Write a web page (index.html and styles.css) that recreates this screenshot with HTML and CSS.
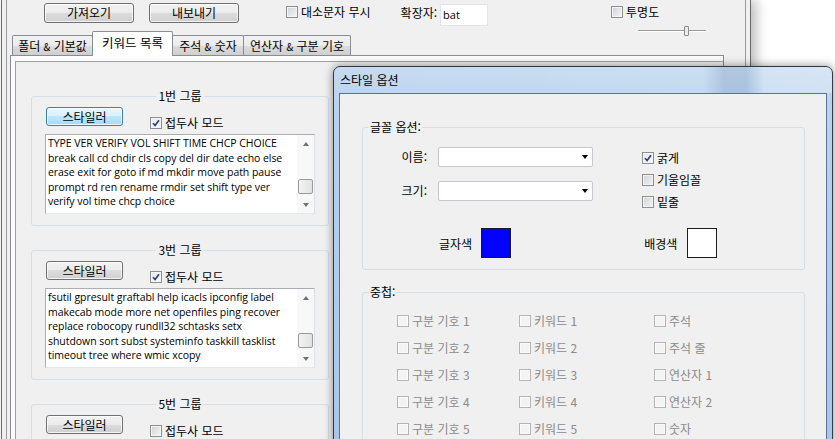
FILE: index.html
```html
<!DOCTYPE html>
<html lang="ko">
<head>
  <meta charset="utf-8">
  <title>스타일 옵션</title>
  <link rel="stylesheet" href="styles.css">
</head>
<body>
<div class="desk">

  <!-- main window -->
  <div class="app">
    <div class="frame">

      <!-- toolbar -->
      <div class="toolbar">
        <button class="btn btn-wide">가져오기</button>
        <button class="btn btn-wide btn-gap">내보내기</button>
        <label class="check case-check"><span class="box"></span>대소문자 무시</label>
        <span class="ext-label">확장자:</span>
        <span class="ext-input">bat</span>
        <div class="opacity">
          <label class="check"><span class="box"></span>투명도</label>
          <div class="slider"><span class="thumb"></span></div>
        </div>
      </div>

      <!-- tabs -->
      <div class="tabs">
        <span class="tab tab-folder">폴더 <small>&amp;</small> 기본값</span>
        <span class="tab tab-active">키워드 목록</span>
        <span class="tab tab-comment">주석 <small>&amp;</small> 숫자</span>
        <span class="tab tab-operator">연산자 <small>&amp;</small> 구분 기호</span>
      </div>

      <div class="tab-panel">
        <div class="scroll-panel">

          <fieldset class="group">
            <legend>1번 그룹</legend>
            <div class="group-head">
              <button class="btn btn-style btn-focus">스타일러</button>
              <label class="check prefix"><span class="box checked"><svg width="8" height="8" viewBox="0 0 8 8"><path d="M1 4.2 L3.1 6.5 L7 1.2" fill="none" stroke="#2b3f78" stroke-width="1.7"/></svg></span>접두사 모드</label>
            </div>
            <div class="keywords">
              <div class="keywords-text">TYPE VER VERIFY VOL SHIFT TIME CHCP CHOICE<br>break call cd chdir cls copy del dir date echo else<br>erase exit for goto if md mkdir move path pause<br>prompt rd ren rename rmdir set shift type ver<br>verify vol time chcp choice</div>
              <div class="vscroll">
                <span class="arrow"><span class="arrow-up"></span></span>
                <span class="track"><span class="thumb-v"></span></span>
                <span class="arrow"><span class="arrow-down"></span></span>
              </div>
            </div>
          </fieldset>

          <fieldset class="group">
            <legend>3번 그룹</legend>
            <div class="group-head">
              <button class="btn btn-style">스타일러</button>
              <label class="check prefix"><span class="box checked"><svg width="8" height="8" viewBox="0 0 8 8"><path d="M1 4.2 L3.1 6.5 L7 1.2" fill="none" stroke="#2b3f78" stroke-width="1.7"/></svg></span>접두사 모드</label>
            </div>
            <div class="keywords">
              <div class="keywords-text">fsutil gpresult graftabl help icacls ipconfig label<br>makecab mode more net openfiles ping recover<br>replace robocopy rundll32 schtasks setx<br>shutdown sort subst systeminfo taskkill tasklist<br>timeout tree where wmic xcopy</div>
              <div class="vscroll">
                <span class="arrow"><span class="arrow-up"></span></span>
                <span class="track"><span class="thumb-v"></span></span>
                <span class="arrow"><span class="arrow-down"></span></span>
              </div>
            </div>
          </fieldset>

          <fieldset class="group">
            <legend>5번 그룹</legend>
            <div class="group-head">
              <button class="btn btn-style">스타일러</button>
              <label class="check prefix"><span class="box"></span>접두사 모드</label>
            </div>
          </fieldset>

        </div>
      </div>
    </div>
  </div>

  <!-- style options dialog -->
  <div class="dialog">
    <div class="dialog-title">스타일 옵션</div>
    <div class="dialog-client">

      <fieldset class="opt-group font-group">
        <legend>글꼴 옵션:</legend>
        <div class="font-body">
          <div class="font-fields">
            <div class="field-row">
              <span class="field-label">이름:</span>
              <span class="combo"><span class="combo-arrow"></span></span>
            </div>
            <div class="field-row field-gap">
              <span class="field-label">크기:</span>
              <span class="combo"><span class="combo-arrow"></span></span>
            </div>
          </div>
          <div class="font-styles">
            <label class="check style-row"><span class="box checked"><svg width="8" height="8" viewBox="0 0 8 8"><path d="M1 4.2 L3.1 6.5 L7 1.2" fill="none" stroke="#2b3f78" stroke-width="1.7"/></svg></span>굵게</label>
            <label class="check style-row"><span class="box"></span>기울임꼴</label>
            <label class="check style-row"><span class="box"></span>밑줄</label>
          </div>
        </div>
        <div class="color-row">
          <div class="color-item"><span>글자색</span><span class="swatch swatch-blue"></span></div>
          <div class="color-item color-back"><span>배경색</span><span class="swatch swatch-white"></span></div>
        </div>
      </fieldset>

      <fieldset class="opt-group overlap-group">
        <legend>중첩:</legend>
        <div class="overlap-grid">
          <label class="check disabled"><span class="box"></span>구분 기호 1</label>
          <label class="check disabled"><span class="box"></span>키워드 1</label>
          <label class="check disabled"><span class="box"></span>주석</label>
          <label class="check disabled"><span class="box"></span>구분 기호 2</label>
          <label class="check disabled"><span class="box"></span>키워드 2</label>
          <label class="check disabled"><span class="box"></span>주석 줄</label>
          <label class="check disabled"><span class="box"></span>구분 기호 3</label>
          <label class="check disabled"><span class="box"></span>키워드 3</label>
          <label class="check disabled"><span class="box"></span>연산자 1</label>
          <label class="check disabled"><span class="box"></span>구분 기호 4</label>
          <label class="check disabled"><span class="box"></span>키워드 4</label>
          <label class="check disabled"><span class="box"></span>연산자 2</label>
          <label class="check disabled"><span class="box"></span>구분 기호 5</label>
          <label class="check disabled"><span class="box"></span>키워드 5</label>
          <label class="check disabled"><span class="box"></span>숫자</label>
        </div>
      </fieldset>

    </div>
  </div>

</div>
</body>
</html>
```

FILE: styles.css
```css
/* Global */
body {
    margin: 0;
    width: 835px;
    height: 439px;
    overflow: hidden;
    background-color: #fff;
    font-family: "Noto Sans CJK KR", "Noto Sans", sans-serif;
    font-size: 12px;
    color: #000;
}

.desk {
    position: relative;
    width: 835px;
    height: 439px;
    overflow: hidden;
}

/* Main window */
.app {
    margin-left: 1px;
    width: 750px;
    height: 439px;
    box-sizing: border-box;
    padding: 0 4px;
    border-left: 1px solid #6a6a6a;
    border-right: 1px solid #6a6a6a;
    background-color: #f0f0f0;
    box-shadow: 5px 0 12px rgba(0, 0, 0, 0.28);
}

.frame {
    height: 100%;
    border-left: 1px solid #9a9a9a;
    border-right: 1px solid #9a9a9a;
}

/* Buttons */
.btn {
    font: inherit;
    color: #000;
    padding: 0;
    height: 20px;
    line-height: 18px;
    border: 1px solid #707070;
    border-radius: 3px;
    background: linear-gradient(#f2f2f2 0%, #ebebeb 50%, #dddddd 50%, #cfcfcf 100%);
    box-shadow: inset 0 0 0 1px rgba(255, 255, 255, 0.75);
}

.btn-focus {
    border-color: #3c7fb1;
    background: linear-gradient(#eaf6fd 0%, #d9f0fc 50%, #bee6fd 50%, #a7d9f5 100%);
}

.btn-wide {
    width: 90px;
    margin-top: 3px;
}

.btn-gap {
    margin-left: 15px;
}

/* Checkboxes */
.check {
    display: inline-flex;
    align-items: center;
    gap: 3px;
    line-height: 14px;
    white-space: nowrap;
}

.box {
    display: inline-flex;
    align-items: center;
    justify-content: center;
    width: 12px;
    height: 12px;
    box-sizing: border-box;
    border: 1px solid #8e8f8f;
    background: linear-gradient(135deg, #cdd1d6, #f6f6f6);
    box-shadow: inset 0 0 0 1px #f4f4f4;
}

.box.checked {
    background: linear-gradient(135deg, #e4e7ea, #fbfbfb);
}

.check.disabled {
    color: #8b8b8b;
}

.check.disabled .box {
    border-color: #b4b4b4;
    background: #f3f3f3;
    box-shadow: inset 0 0 0 1px #fafafa;
}

/* Toolbar */
.toolbar {
    display: flex;
    align-items: flex-start;
    height: 33px;
    padding-left: 37px;
}

.case-check {
    margin-left: 47px;
    margin-top: 5px;
}

.ext-label {
    margin-left: 30px;
    margin-top: 6px;
    line-height: 14px;
}

.ext-input {
    margin-left: 3px;
    margin-top: 4px;
    width: 48px;
    height: 22px;
    box-sizing: border-box;
    padding-left: 2px;
    border: 1px solid #e1e5ea;
    background-color: #fff;
    font-family: "Open Sans", sans-serif;
    font-size: 11px;
    line-height: 20px;
}

.opacity {
    margin-left: 123px;
    margin-top: 4px;
}

.slider {
    margin: 5px 0 0 27px;
    width: 68px;
    height: 10px;
    background:
        linear-gradient(#9c9c9c, #9c9c9c) 0 4px / 100% 1px no-repeat,
        linear-gradient(#ffffff, #ffffff) 0 5px / 100% 1px no-repeat;
}

.thumb {
    display: block;
    margin-left: 46px;
    width: 5px;
    height: 10px;
    box-sizing: border-box;
    border: 1px solid #8c8c8c;
    border-radius: 1px;
    background-color: #ececec;
}

/* Tabs */
.tabs {
    display: flex;
    align-items: flex-end;
    height: 22px;
    padding-left: 5px;
}

.tab {
    height: 20px;
    box-sizing: border-box;
    padding-top: 2px;
    margin-right: -1px;
    border: 1px solid #898c95;
    border-bottom: none;
    border-radius: 2px 2px 0 0;
    background: linear-gradient(#f2f2f2 0%, #ebebeb 50%, #dddddd 50%, #cfcfcf 100%);
    line-height: 16px;
    text-align: center;
    white-space: nowrap;
}

.tab small {
    font-size: 10px;
}

.tab-folder { width: 81px; }
.tab-comment { width: 72px; }
.tab-operator { width: 108px; }

.tab-active {
    position: relative;
    z-index: 1;
    width: 81px;
    height: 25px;
    margin-bottom: -1px;
    padding-top: 3px;
    font-size: 12.5px;
    background-color: #fff;
    background-image: none;
}

.tab-panel {
    margin-left: 3px;
    width: 714px;
    height: 400px;
    box-sizing: border-box;
    padding: 5px 0 0 4px;
    border: 1px solid #898c95;
    background-color: #fcfcfc;
}

.scroll-panel {
    height: 400px;
    box-sizing: border-box;
    padding: 27px 0 0 15px;
    border-left: 1px solid #a0a0a0;
    border-top: 1px solid #a0a0a0;
    background-color: #f0f0f0;
}

/* Group boxes */
fieldset {
    margin: 0;
    padding: 0;
    min-width: 0;
    border: 1px solid #d5dfe5;
    border-radius: 3px;
}

legend {
    padding: 0 2px;
    line-height: 14px;
}

.group {
    width: 298px;
    box-sizing: border-box;
    padding: 0 14px 11px;
    margin-bottom: 17px;
}

.group legend {
    margin: 0 auto;
}

.group-head {
    display: flex;
    align-items: flex-start;
    height: 23px;
    margin-top: 4px;
}

.btn-style {
    width: 77px;
    height: 19px;
    line-height: 17px;
}

.prefix {
    margin-left: 27px;
    margin-top: 9px;
}

.keywords {
    display: flex;
    margin: 4px 0 0 -1px;
    width: 270px;
    height: 80px;
    box-sizing: border-box;
    border: 1px solid #abadb3;
    border-right-color: #dbdfe6;
    border-bottom-color: #e3e9ef;
    background-color: #fff;
}

.keywords-text {
    flex: 1;
    overflow: hidden;
    padding: 1px 0 0 2px;
    font-family: "Open Sans", sans-serif;
    font-size: 10.5px;
    letter-spacing: -0.05px;
    line-height: 14.5px;
    white-space: nowrap;
}

.vscroll {
    display: flex;
    flex-direction: column;
    align-items: center;
    width: 17px;
    background-color: #f8f8f8;
}

.arrow {
    display: flex;
    align-items: center;
    justify-content: center;
    height: 17px;
    width: 17px;
}

.arrow-up {
    border-left: 3.5px solid transparent;
    border-right: 3.5px solid transparent;
    border-bottom: 4px solid #707070;
}

.arrow-down {
    border-left: 3.5px solid transparent;
    border-right: 3.5px solid transparent;
    border-top: 4px solid #707070;
}

.track {
    flex: 1;
    display: flex;
    flex-direction: column;
    justify-content: flex-end;
    padding-bottom: 2px;
}

.thumb-v {
    width: 15px;
    height: 15px;
    box-sizing: border-box;
    border: 1px solid #9b9b9b;
    border-radius: 2px;
    background: linear-gradient(to right, #f3f3f3, #e2e2e2);
}

/* Dialog */
.dialog {
    position: absolute;
    left: 333px;
    top: 66px;
    width: 500px;
    height: 390px;
    box-sizing: border-box;
    border: 1px solid #2f3845;
    border-radius: 7px 7px 0 0;
    background: linear-gradient(#c6dbf1, #b9d2ed 40px, #a8c6e7);
    box-shadow: 0 0 10px rgba(0, 0, 0, 0.45);
}

.dialog-title {
    height: 26px;
    padding-left: 6px;
    line-height: 26px;
    border-radius: 6px 6px 0 0;
    background: linear-gradient(to right,
        rgba(255, 255, 255, 0) 0,
        rgba(255, 255, 255, 0.1) 370px,
        rgba(70, 95, 130, 0.16) 390px,
        rgba(70, 95, 130, 0.16) 412px,
        rgba(255, 255, 255, 0.25) 430px,
        rgba(255, 255, 255, 0.3) 100%);
}

.dialog-client {
    margin: 0 5px;
    height: 370px;
    border: 1px solid #5b7393;
    border-bottom: none;
    background-color: #f0f0f0;
}

.opt-group {
    margin-left: 22px;
    width: 441px;
}

.opt-group legend {
    margin-left: 6px;
    padding: 0 1px;
}

.font-group {
    margin-top: 26px;
    padding-bottom: 11px;
}

.font-body {
    display: flex;
}

.font-fields {
    margin-top: 13px;
}

.field-row {
    display: flex;
    height: 20px;
}

.field-gap {
    margin-top: 14px;
}

.field-label {
    width: 64px;
    text-align: right;
    line-height: 20px;
}

.combo {
    display: flex;
    align-items: center;
    justify-content: flex-end;
    margin-left: 11px;
    width: 155px;
    height: 20px;
    box-sizing: border-box;
    padding-right: 4px;
    border: 1px solid #c5c8cd;
    border-radius: 2px;
    background-color: #fff;
}

.combo-arrow {
    border-left: 3.5px solid transparent;
    border-right: 3.5px solid transparent;
    border-top: 4px solid #000;
}

.font-styles {
    display: flex;
    flex-direction: column;
    margin: 13px 0 0 49px;
}

.style-row {
    height: 22px;
}

.color-row {
    display: flex;
    align-items: center;
    margin-top: 15px;
    padding-left: 76px;
}

.color-item {
    display: flex;
    align-items: center;
    gap: 9px;
}

.color-back {
    margin-left: 133px;
    gap: 10px;
}

.swatch {
    width: 30px;
    height: 30px;
    box-sizing: border-box;
    border: 1px solid #1c1c1c;
}

.swatch-blue {
    background-color: #0000ff;
}

.swatch-white {
    background-color: #fff;
}

.overlap-group {
    margin-top: 15px;
    height: 200px;
}

.overlap-grid {
    display: grid;
    grid-template-columns: 122px 135px 1fr;
    grid-auto-rows: 27px;
    align-items: center;
    padding: 8px 0 0 34px;
}
```
